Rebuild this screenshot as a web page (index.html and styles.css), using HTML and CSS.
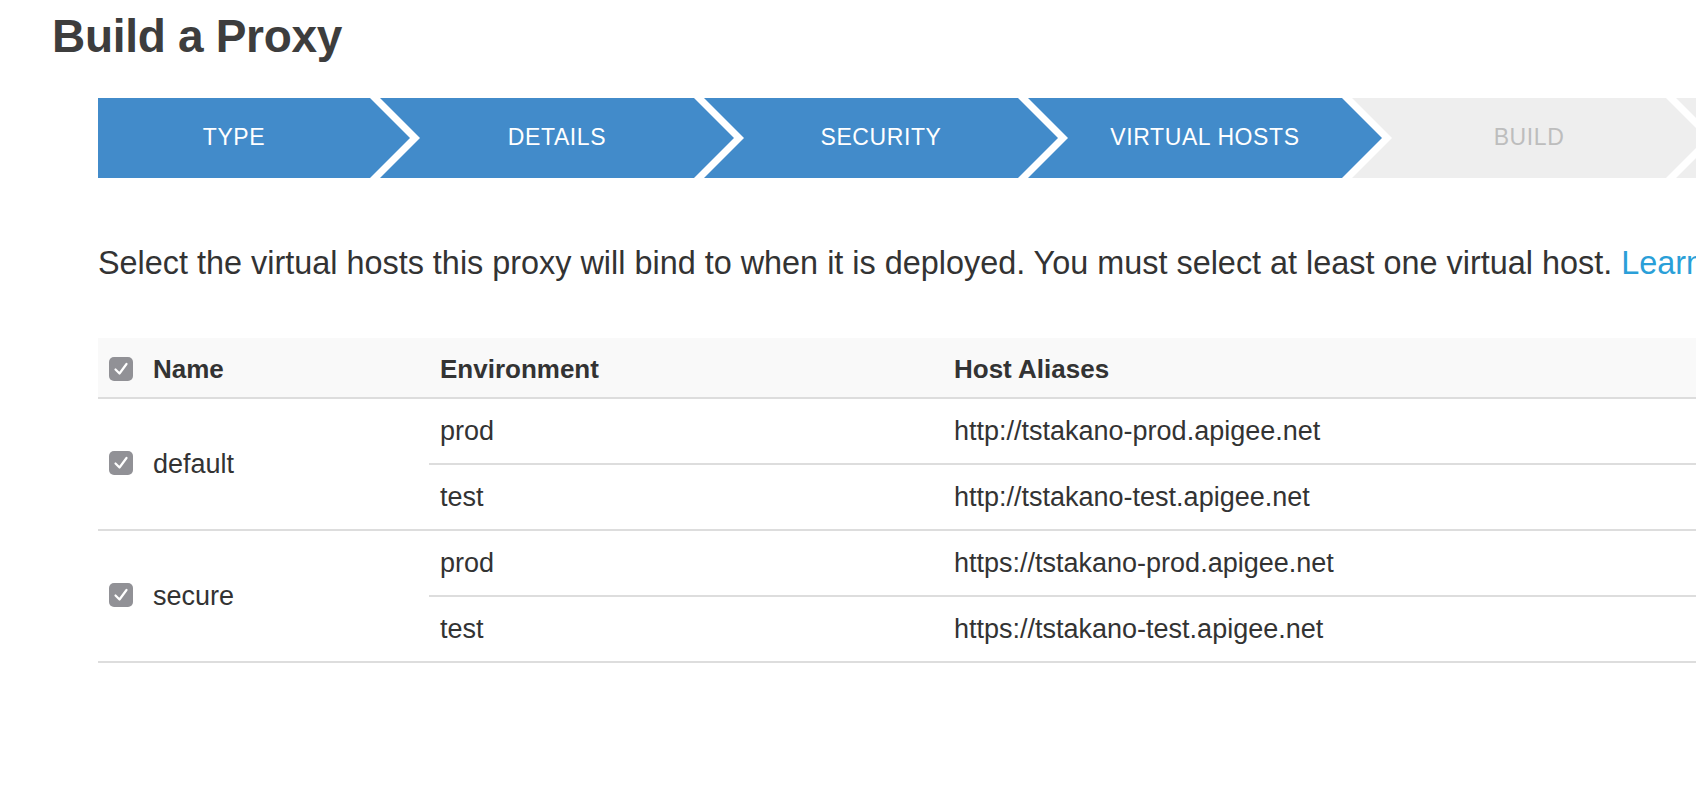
FILE: index.html
```html
<!DOCTYPE html>
<html lang="en">
<head>
<meta charset="utf-8">
<title>Build a Proxy</title>
<link rel="stylesheet" href="styles.css">
</head>
<body>
<div class="page">
  <h1 class="title">Build a Proxy</h1>
  <div class="content">
    <div class="steps">
      <div class="step step-first done"><span>TYPE</span></div>
      <div class="step done"><span>DETAILS</span></div>
      <div class="step done"><span>SECURITY</span></div>
      <div class="step done"><span>VIRTUAL HOSTS</span></div>
      <div class="step todo"><span>BUILD</span></div>
      <div class="step todo"><span></span></div>
    </div>

    <p class="intro">Select the virtual hosts this proxy will bind to when it is deployed. You must select at least one virtual host. <a class="link" href="#">Learn more</a></p>

    <table class="hosts">
      <thead>
        <tr>
          <th class="col-name"><span class="cb"><svg viewBox="0 0 24 24" width="24" height="24"><path d="M6.5 12.5 L10.5 16.5 L17.5 7" fill="none" stroke="#fff" stroke-width="2.2" stroke-linecap="round" stroke-linejoin="round"/></svg></span>Name</th>
          <th class="col-env">Environment</th>
          <th class="col-host">Host Aliases</th>
        </tr>
      </thead>
      <tbody>
        <tr class="group-start">
          <td class="col-name" rowspan="2"><span class="cb"><svg viewBox="0 0 24 24" width="24" height="24"><path d="M6.5 12.5 L10.5 16.5 L17.5 7" fill="none" stroke="#fff" stroke-width="2.2" stroke-linecap="round" stroke-linejoin="round"/></svg></span>default</td>
          <td class="col-env">prod</td>
          <td class="col-host">http://tstakano-prod.apigee.net</td>
        </tr>
        <tr>
          <td class="col-env">test</td>
          <td class="col-host">http://tstakano-test.apigee.net</td>
        </tr>
        <tr class="group-start">
          <td class="col-name" rowspan="2"><span class="cb"><svg viewBox="0 0 24 24" width="24" height="24"><path d="M6.5 12.5 L10.5 16.5 L17.5 7" fill="none" stroke="#fff" stroke-width="2.2" stroke-linecap="round" stroke-linejoin="round"/></svg></span>secure</td>
          <td class="col-env">prod</td>
          <td class="col-host">https://tstakano-prod.apigee.net</td>
        </tr>
        <tr class="group-end">
          <td class="col-env">test</td>
          <td class="col-host">https://tstakano-test.apigee.net</td>
        </tr>
      </tbody>
    </table>
  </div>
</div>
</body>
</html>
```

FILE: styles.css
```css
html, body {
  margin: 0;
  padding: 0;
  background: #ffffff;
  overflow: hidden;
}

body {
  font-family: "Liberation Sans", Arial, Helvetica, sans-serif;
  color: #333333;
  width: 1696px;
  height: 802px;
}

.page {
  padding: 8px 0 0 52px;
  width: 2000px;
}

.title {
  margin: 0;
  font-size: 46px;
  line-height: 56px;
  font-weight: 700;
  color: #3d3d3d;
  letter-spacing: -0.3px;
}

.content {
  margin-left: 46px;
}

/* Wizard steps */
.steps {
  display: flex;
  margin-top: 34px;
  height: 80px;
}

.step {
  flex: 0 0 auto;
  width: 354px;
  height: 80px;
  margin-left: -30px;
  padding-left: 40px;
  padding-right: 40px;
  padding-bottom: 2px;
  box-sizing: border-box;
  display: flex;
  align-items: center;
  justify-content: center;
  font-size: 23px;
  letter-spacing: 0.6px;
  clip-path: polygon(0 0, calc(100% - 40px) 0, 100% 50%, calc(100% - 40px) 100%, 0 100%, 40px 50%);
}

.step-first {
  width: 312px;
  margin-left: 0;
  padding-left: 0;
  clip-path: polygon(0 0, calc(100% - 40px) 0, 100% 50%, calc(100% - 40px) 100%, 0 100%);
}

.done {
  background: #428bca;
  color: #ffffff;
}

.todo {
  background: #eeeeee;
  color: #bdbdbd;
}

/* Intro paragraph */
.intro {
  margin: 65px 0 0 0;
  font-size: 32.4px;
  line-height: 40px;
  white-space: nowrap;
  color: #333333;
}

.link {
  color: #2a9fd8;
  text-decoration: none;
}

/* Table */
.hosts {
  margin-top: 55px;
  width: 1650px;
  border-collapse: collapse;
  font-size: 27px;
  color: #333333;
}

.hosts th,
.hosts td {
  text-align: left;
  padding: 0 0 0 11px;
  vertical-align: middle;
}

.hosts thead th {
  background: #f9f9f9;
  height: 60px;
  padding-top: 3px;
  box-sizing: border-box;
  font-size: 26px;
  font-weight: 700;
  border-bottom: 2px solid #dddddd;
}

.hosts tbody td {
  height: 64px;
  border-top: 2px solid #dddddd;
}

.hosts thead + tbody tr:first-child td {
  border-top: 0;
}

.hosts tbody tr.group-end td,
.hosts tbody td[rowspan] {
  border-bottom: 2px solid #dddddd;
}

.col-name {
  width: 320px;
}

.col-env {
  width: 503px;
}

.cb {
  display: inline-block;
  width: 24px;
  height: 24px;
  border-radius: 5px;
  background: #919196;
  vertical-align: middle;
  margin-right: 20px;
  position: relative;
  top: -2px;
}

.cb svg {
  display: block;
}
```
